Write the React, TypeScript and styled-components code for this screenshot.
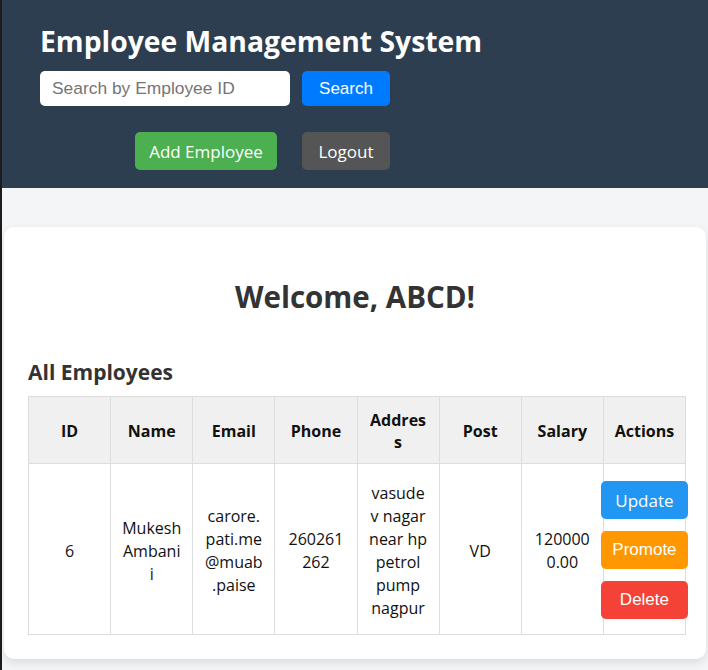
import React from "react";
import styled, { createGlobalStyle } from "styled-components";

const GlobalStyle = createGlobalStyle`
  html, body { margin: 0; padding: 0; }
  body {
    background: #f4f5f7;
    font-family: "Open Sans", "Noto Sans", sans-serif;
    overflow: hidden;
  }
  * { box-sizing: border-box; }
`;

const Page = styled.div`
  min-height: 100vh;
  border-left: 2px solid #1c1c1c;
  background: #f4f5f7;
`;

const Header = styled.header`
  background: #2c3e50;
  height: 188px;
  padding: 22px 38px 0;
`;

const Title = styled.h1`
  margin: 0;
  color: #ffffff;
  font-family: "Open Sans", sans-serif;
  font-weight: 700;
  font-size: 28.3px;
  line-height: 38px;
`;

const Controls = styled.div`
  display: inline-flex;
  flex-direction: column;
  align-items: flex-end;
  gap: 26px;
  margin-top: 11px;
`;

const Row = styled.div<{ $gap: number }>`
  display: flex;
  gap: ${(p) => p.$gap}px;
`;

const SearchInput = styled.input`
  width: 250px;
  height: 35px;
  border: none;
  border-radius: 5px;
  padding: 0 12px;
  font-family: "Liberation Sans", Arial, sans-serif;
  font-size: 17.4px;
  color: #333;
  outline: none;
  &::placeholder { color: #757575; }
`;

const HeaderButton = styled.button<{ $bg: string; $h: number; $w: number; $font: string }>`
  width: ${(p) => p.$w}px;
  height: ${(p) => p.$h}px;
  border: none;
  border-radius: 5px;
  background: ${(p) => p.$bg};
  color: #ffffff;
  font-family: ${(p) => p.$font};
  font-size: 17px;
  padding: 0;
  cursor: pointer;
`;

const Main = styled.main`
  padding: 39px 0 0 2px;
`;

const Card = styled.section`
  width: 702px;
  background: #ffffff;
  border-radius: 10px;
  box-shadow: 0 4px 10px rgba(0, 0, 0, 0.1);
  padding: 24px 24px 24px;
`;

const Welcome = styled.h2`
  margin: 26px 0 0;
  text-align: center;
  color: #333333;
  font-size: 29.5px;
  font-weight: 700;
  line-height: 40px;
`;

const SectionTitle = styled.h3`
  margin: 41px 0 10px;
  color: #333333;
  font-size: 21px;
  font-weight: 700;
  line-height: 28px;
`;

const Table = styled.table`
  width: 658px;
  table-layout: fixed;
  border-collapse: collapse;
  color: #111;
  font-size: 16px;
`;

const Th = styled.th`
  background: #f0f0f0;
  border: 1px solid #dddddd;
  padding: 11px 10px 9px;
  font-weight: 700;
  line-height: 22px;
  text-align: center;
  overflow-wrap: anywhere;
  height: 67px;
`;

const Td = styled.td`
  border: 1px solid #dddddd;
  padding: 14px 10.5px 10px;
  line-height: 23px;
  text-align: center;
  overflow-wrap: anywhere;
`;

const Actions = styled.div`
  display: flex;
  flex-direction: column;
  align-items: center;
  gap: 12px;
  padding: 3px 0 5px;
`;

const ActionButton = styled.button<{ $bg: string; $font: string }>`
  flex-shrink: 0;
  width: 87px;
  height: 38px;
  border: none;
  border-radius: 5px;
  background: ${(p) => p.$bg};
  color: #ffffff;
  font-family: ${(p) => p.$font};
  font-size: 17px;
  padding: 0;
  cursor: pointer;
`;

const OPEN = `"Open Sans", sans-serif`;
const ARIAL = `"Liberation Sans", Arial, sans-serif`;

const columns = ["ID", "Name", "Email", "Phone", "Address", "Post", "Salary", "Actions"];

const employees = [
  {
    id: 6,
    name: "Mukesh Ambanii",
    email: "carore.pati.me@muab.paise",
    phone: "260261262",
    address: "vasudev nagar near hp petrol pump nagpur",
    post: "VD",
    salary: "1200000.00",
  },
];

export default function App() {
  return (
    <Page>
      <GlobalStyle />
      <Header>
        <Title>Employee Management System</Title>
        <Controls>
          <Row $gap={12}>
            <SearchInput placeholder="Search by Employee ID" />
            <HeaderButton $bg="#007bff" $h={35} $w={88} $font={ARIAL}>
              Search
            </HeaderButton>
          </Row>
          <Row $gap={25}>
            <HeaderButton $bg="#4caf50" $h={38} $w={142} $font={OPEN}>
              Add Employee
            </HeaderButton>
            <HeaderButton $bg="#555555" $h={38} $w={88} $font={OPEN}>
              Logout
            </HeaderButton>
          </Row>
        </Controls>
      </Header>
      <Main>
        <Card>
          <Welcome>Welcome, ABCD!</Welcome>
          <SectionTitle>All Employees</SectionTitle>
          <Table>
            <thead>
              <tr>
                {columns.map((c) => (
                  <Th key={c}>{c}</Th>
                ))}
              </tr>
            </thead>
            <tbody>
              {employees.map((e) => (
                <tr key={e.id}>
                  <Td>{e.id}</Td>
                  <Td>{e.name}</Td>
                  <Td>{e.email}</Td>
                  <Td>{e.phone}</Td>
                  <Td>{e.address}</Td>
                  <Td>{e.post}</Td>
                  <Td>{e.salary}</Td>
                  <Td>
                    <Actions>
                      <ActionButton $bg="#2196f3" $font={OPEN}>Update</ActionButton>
                      <ActionButton $bg="#ff9800" $font={ARIAL}>Promote</ActionButton>
                      <ActionButton $bg="#f44336" $font={ARIAL}>Delete</ActionButton>
                    </Actions>
                  </Td>
                </tr>
              ))}
            </tbody>
          </Table>
        </Card>
      </Main>
    </Page>
  );
}
